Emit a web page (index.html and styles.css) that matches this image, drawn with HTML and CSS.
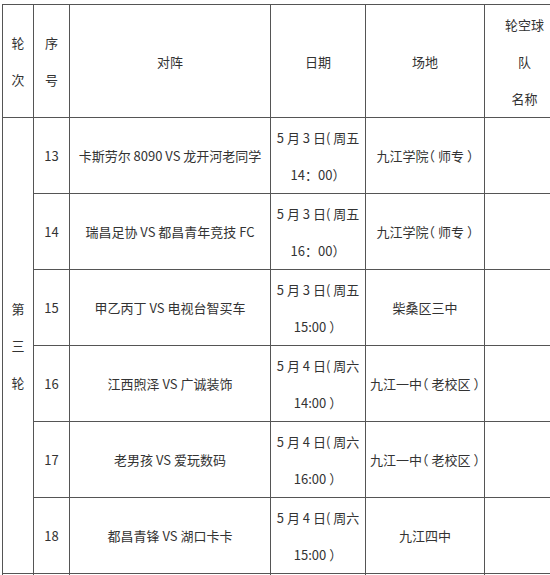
FILE: index.html
```html
<!DOCTYPE html>
<html lang="zh-CN">
<head>
<meta charset="utf-8">
<title>赛程表</title>
<link rel="stylesheet" href="styles.css">
</head>
<body>
<table class="schedule">
  <colgroup>
    <col class="c-round">
    <col class="c-no">
    <col class="c-match">
    <col class="c-date">
    <col class="c-venue">
    <col class="c-bye">
  </colgroup>
  <thead>
    <tr class="head-row">
      <th>轮<br>次</th>
      <th>序<br>号</th>
      <th>对阵</th>
      <th>日期</th>
      <th>场地</th>
      <th>轮空球<br>队<br>名称</th>
    </tr>
  </thead>
  <tbody>
    <tr class="row">
      <td rowspan="6" class="round">第<br>三<br>轮</td>
      <td>13</td>
      <td>卡斯劳尔 8090 VS 龙开河老同学</td>
      <td class="date">5 月 3 日( 周五<br>14：00）</td>
      <td class="venue">九江学院（ 师专 ）</td>
      <td></td>
    </tr>
    <tr class="row">
      <td>14</td>
      <td>瑞昌足协 VS 都昌青年竞技 FC</td>
      <td class="date">5 月 3 日( 周五<br>16：00）</td>
      <td class="venue">九江学院（ 师专 ）</td>
      <td></td>
    </tr>
    <tr class="row">
      <td>15</td>
      <td>甲乙丙丁 VS 电视台智买车</td>
      <td class="date">5 月 3 日( 周五<br>15:00 ）</td>
      <td class="venue">柴桑区三中</td>
      <td></td>
    </tr>
    <tr class="row">
      <td>16</td>
      <td>江西煦泽 VS 广诚装饰</td>
      <td class="date">5 月 4 日( 周六<br>14:00 ）</td>
      <td class="venue">九江一中（ 老校区 ）</td>
      <td></td>
    </tr>
    <tr class="row">
      <td>17</td>
      <td>老男孩 VS 爱玩数码</td>
      <td class="date">5 月 4 日( 周六<br>16:00 ）</td>
      <td class="venue">九江一中（ 老校区 ）</td>
      <td></td>
    </tr>
    <tr class="row">
      <td>18</td>
      <td>都昌青锋 VS 湖口卡卡</td>
      <td class="date">5 月 4 日( 周六<br>15:00 ）</td>
      <td class="venue">九江四中</td>
      <td></td>
    </tr>
    <tr class="row">
      <td></td>
      <td></td>
      <td></td>
      <td></td>
      <td></td>
      <td></td>
    </tr>
  </tbody>
</table>
</body>
</html>
```
FILE: styles.css
```css
html, body {
  margin: 0;
  padding: 0;
  overflow: hidden;
  background: #ffffff;
}

body {
  font-family: "Noto Sans CJK SC", "Noto Sans", sans-serif;
  font-size: 13px;
  color: #333333;
}

.schedule {
  border-collapse: collapse;
  table-layout: fixed;
  width: 562px;
  margin: 4px 0 0 2px;
}

.c-round { width: 31px; }
.c-no { width: 36px; }
.c-match { width: 201px; }
.c-date { width: 95px; }
.c-venue { width: 119px; }
.c-bye { width: 80px; }

.schedule th,
.schedule td {
  border: 1px solid #555555;
  text-align: center;
  vertical-align: middle;
  padding: 0;
  font-weight: normal;
  line-height: 37px;
  white-space: nowrap;
}

.head-row {
  height: 113px;
}

.row {
  height: 76px;
}

.date {
  line-height: 36px;
}

.venue {
  font-feature-settings: "halt";
}

.round {
  line-height: 37.5px;
}
```
